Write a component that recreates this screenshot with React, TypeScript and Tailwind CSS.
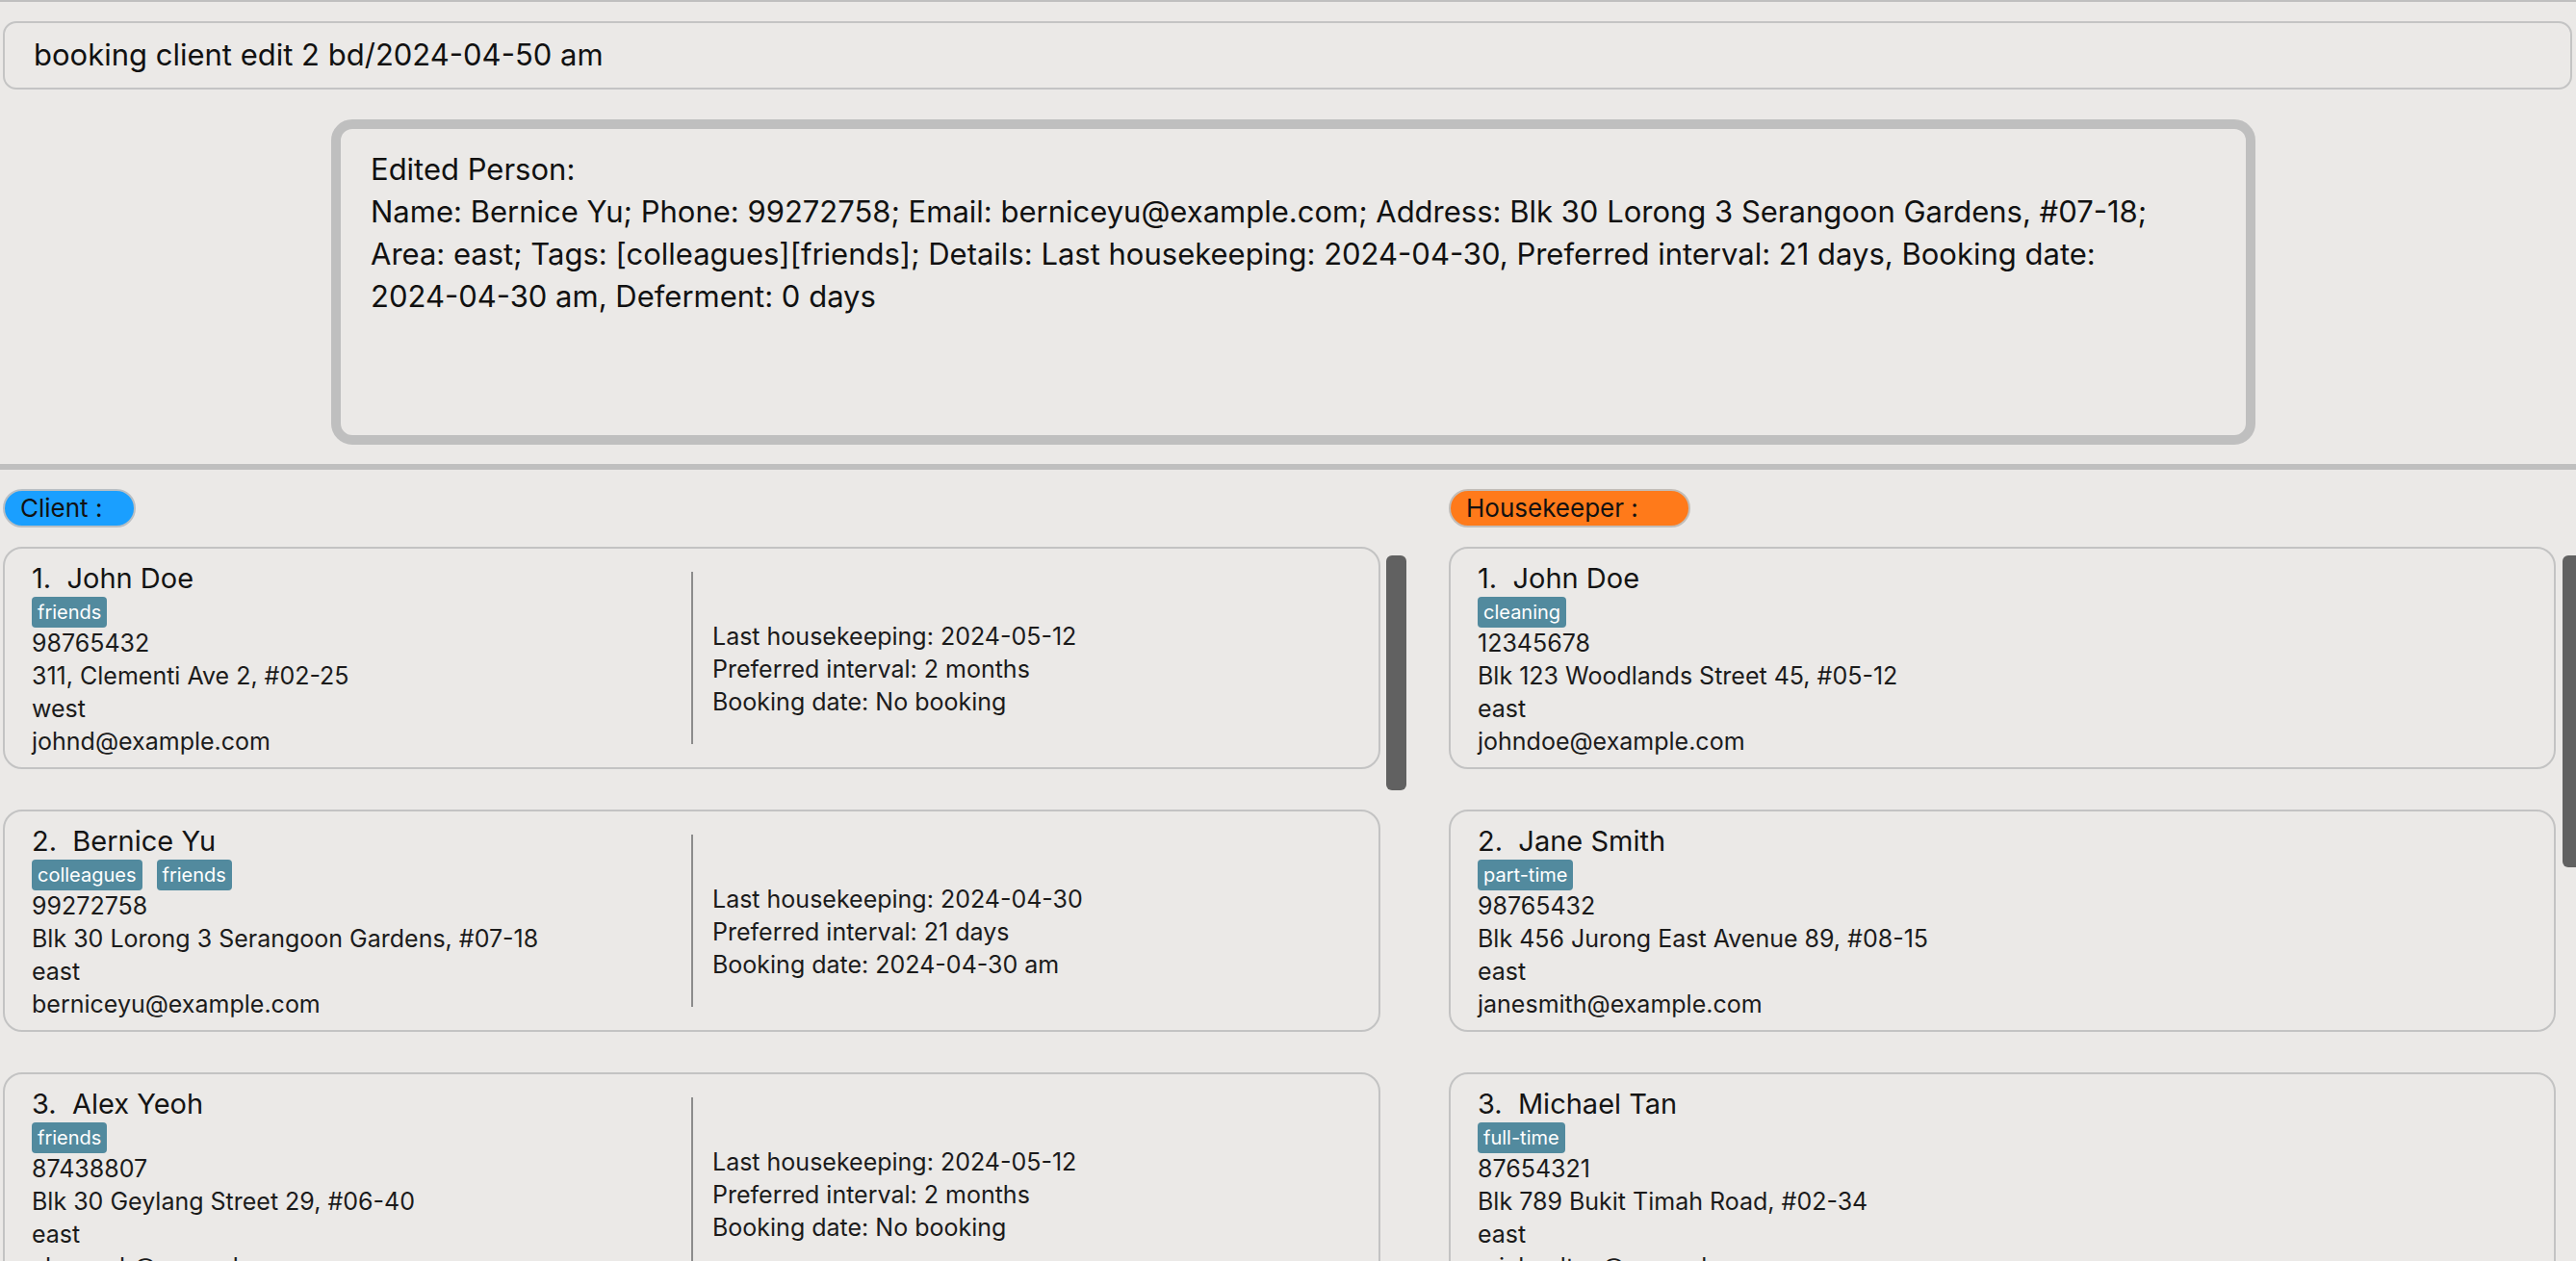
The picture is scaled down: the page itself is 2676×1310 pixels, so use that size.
import React from 'react';

type Person = {
  name: string;
  tags: string[];
  phone: string;
  address: string;
  area: string;
  email: string;
  last?: string;
  interval?: string;
  booking?: string;
};

const clients: Person[] = [
  { name: 'John Doe', tags: ['friends'], phone: '98765432', address: '311, Clementi Ave 2, #02-25', area: 'west', email: 'johnd@example.com', last: '2024-05-12', interval: '2 months', booking: 'No booking' },
  { name: 'Bernice Yu', tags: ['colleagues', 'friends'], phone: '99272758', address: 'Blk 30 Lorong 3 Serangoon Gardens, #07-18', area: 'east', email: 'berniceyu@example.com', last: '2024-04-30', interval: '21 days', booking: '2024-04-30 am' },
  { name: 'Alex Yeoh', tags: ['friends'], phone: '87438807', address: 'Blk 30 Geylang Street 29, #06-40', area: 'east', email: 'alexyeoh@example.com', last: '2024-05-12', interval: '2 months', booking: 'No booking' },
];

const housekeepers: Person[] = [
  { name: 'John Doe', tags: ['cleaning'], phone: '12345678', address: 'Blk 123 Woodlands Street 45, #05-12', area: 'east', email: 'johndoe@example.com' },
  { name: 'Jane Smith', tags: ['part-time'], phone: '98765432', address: 'Blk 456 Jurong East Avenue 89, #08-15', area: 'east', email: 'janesmith@example.com' },
  { name: 'Michael Tan', tags: ['full-time'], phone: '87654321', address: 'Blk 789 Bukit Timah Road, #02-34', area: 'east', email: 'michaeltan@example.com' },
];

const PersonCard: React.FC<{ p: Person; index: number; withDetails?: boolean }> = ({ p, index, withDetails }) => (
  <div className="h-[231px] shrink-0 rounded-[20px] border-2 border-[#c3c3c3] flex">
    <div className={withDetails ? 'w-[713px] pl-[28px] pt-[13px]' : 'flex-1 pl-[28px] pt-[13px]'}>
      <div className="text-[29px] leading-[36px] whitespace-pre text-[#141414]">{`${index}.  ${p.name}`}</div>
      <div className="flex gap-[15px] mt-[1px]">
        {p.tags.map((t) => (
          <span key={t} className="h-[32px] px-[6px] rounded-[4px] bg-[#528a9e] text-white text-[20px] leading-[32px]">
            {t}
          </span>
        ))}
      </div>
      <div className="text-[25px] leading-[34px] -mt-[1px] text-[#1b1b1b]">
        <div>{p.phone}</div>
        <div>{p.address}</div>
        <div>{p.area}</div>
        <div>{p.email}</div>
      </div>
    </div>
    {withDetails && (
      <>
        <div className="w-[2px] my-[24px] bg-[#8c8c8c]" />
        <div className="pl-[20px] pt-[74px] text-[25px] leading-[34px] text-[#1b1b1b]">
          <div>Last housekeeping: {p.last}</div>
          <div>Preferred interval: {p.interval}</div>
          <div>Booking date: {p.booking}</div>
        </div>
      </>
    )}
  </div>
);

const App: React.FC = () => {
  return (
    <div className="w-[2676px] h-[1310px] overflow-hidden bg-[#ebe9e7] border-t-2 border-[#bfbfbf] font-[Inter,sans-serif] text-[#111]">
      {/* Command box */}
      <div className="pl-[3px] pr-[4px] pt-[20px]">
        <div className="h-[71px] rounded-[14px] border-2 border-[#c4c4c4] pl-[30px] flex items-center text-[31px]">
          booking client edit 2 bd/2024-04-50 am
        </div>
      </div>

      {/* Result display */}
      <div className="pl-[344px] pt-[31px]">
        <div className="w-[1999px] h-[338px] rounded-[22px] border-[10px] border-[#bfbfbf] pt-[20px] pl-[31px] text-[31px] leading-[44px] whitespace-nowrap">
          <div>Edited Person:</div>
          <div>Name: Bernice Yu; Phone: 99272758; Email: berniceyu@example.com; Address: Blk 30 Lorong 3 Serangoon Gardens, #07-18;</div>
          <div>Area: east; Tags: [colleagues][friends]; Details: Last housekeeping: 2024-04-30, Preferred interval: 21 days, Booking date:</div>
          <div>2024-04-30 am, Deferment: 0 days</div>
        </div>
      </div>

      <div className="mt-[20px] h-[6px] bg-[#bfbfbf]" />

      {/* Lists */}
      <div className="flex pt-[20px]">
        <div className="w-[1505px] pl-[3px] shrink-0">
          <div className="w-[138px] h-[40px] rounded-full border-2 border-[#b9bfc4] bg-[#1a9fff] pl-[16px] text-[26px] leading-[36px]">
            Client :
          </div>
          <div className="flex mt-[20px]">
            <div className="w-[1431px] flex flex-col gap-[42px]">
              {clients.map((c, i) => (
                <PersonCard key={c.name} p={c} index={i + 1} withDetails />
              ))}
            </div>
            <div className="ml-[6px] mt-[9px] w-[21px] h-[244px] rounded-[6px] bg-[#616161]" />
          </div>
        </div>

        <div className="flex-1 overflow-hidden">
          <div className="w-[251px] h-[40px] rounded-full border-2 border-[#c2bdb8] bg-[#ff7a1a] pl-[16px] text-[26px] leading-[36px]">
            Housekeeper :
          </div>
          <div className="flex mt-[20px]">
            <div className="w-[1150px] shrink-0 flex flex-col gap-[42px]">
              {housekeepers.map((h, i) => (
                <PersonCard key={h.name} p={h} index={i + 1} />
              ))}
            </div>
            <div className="ml-[7px] mt-[9px] w-[21px] h-[324px] shrink-0 rounded-[6px] bg-[#616161]" />
          </div>
        </div>
      </div>
    </div>
  );
};

export default App;
